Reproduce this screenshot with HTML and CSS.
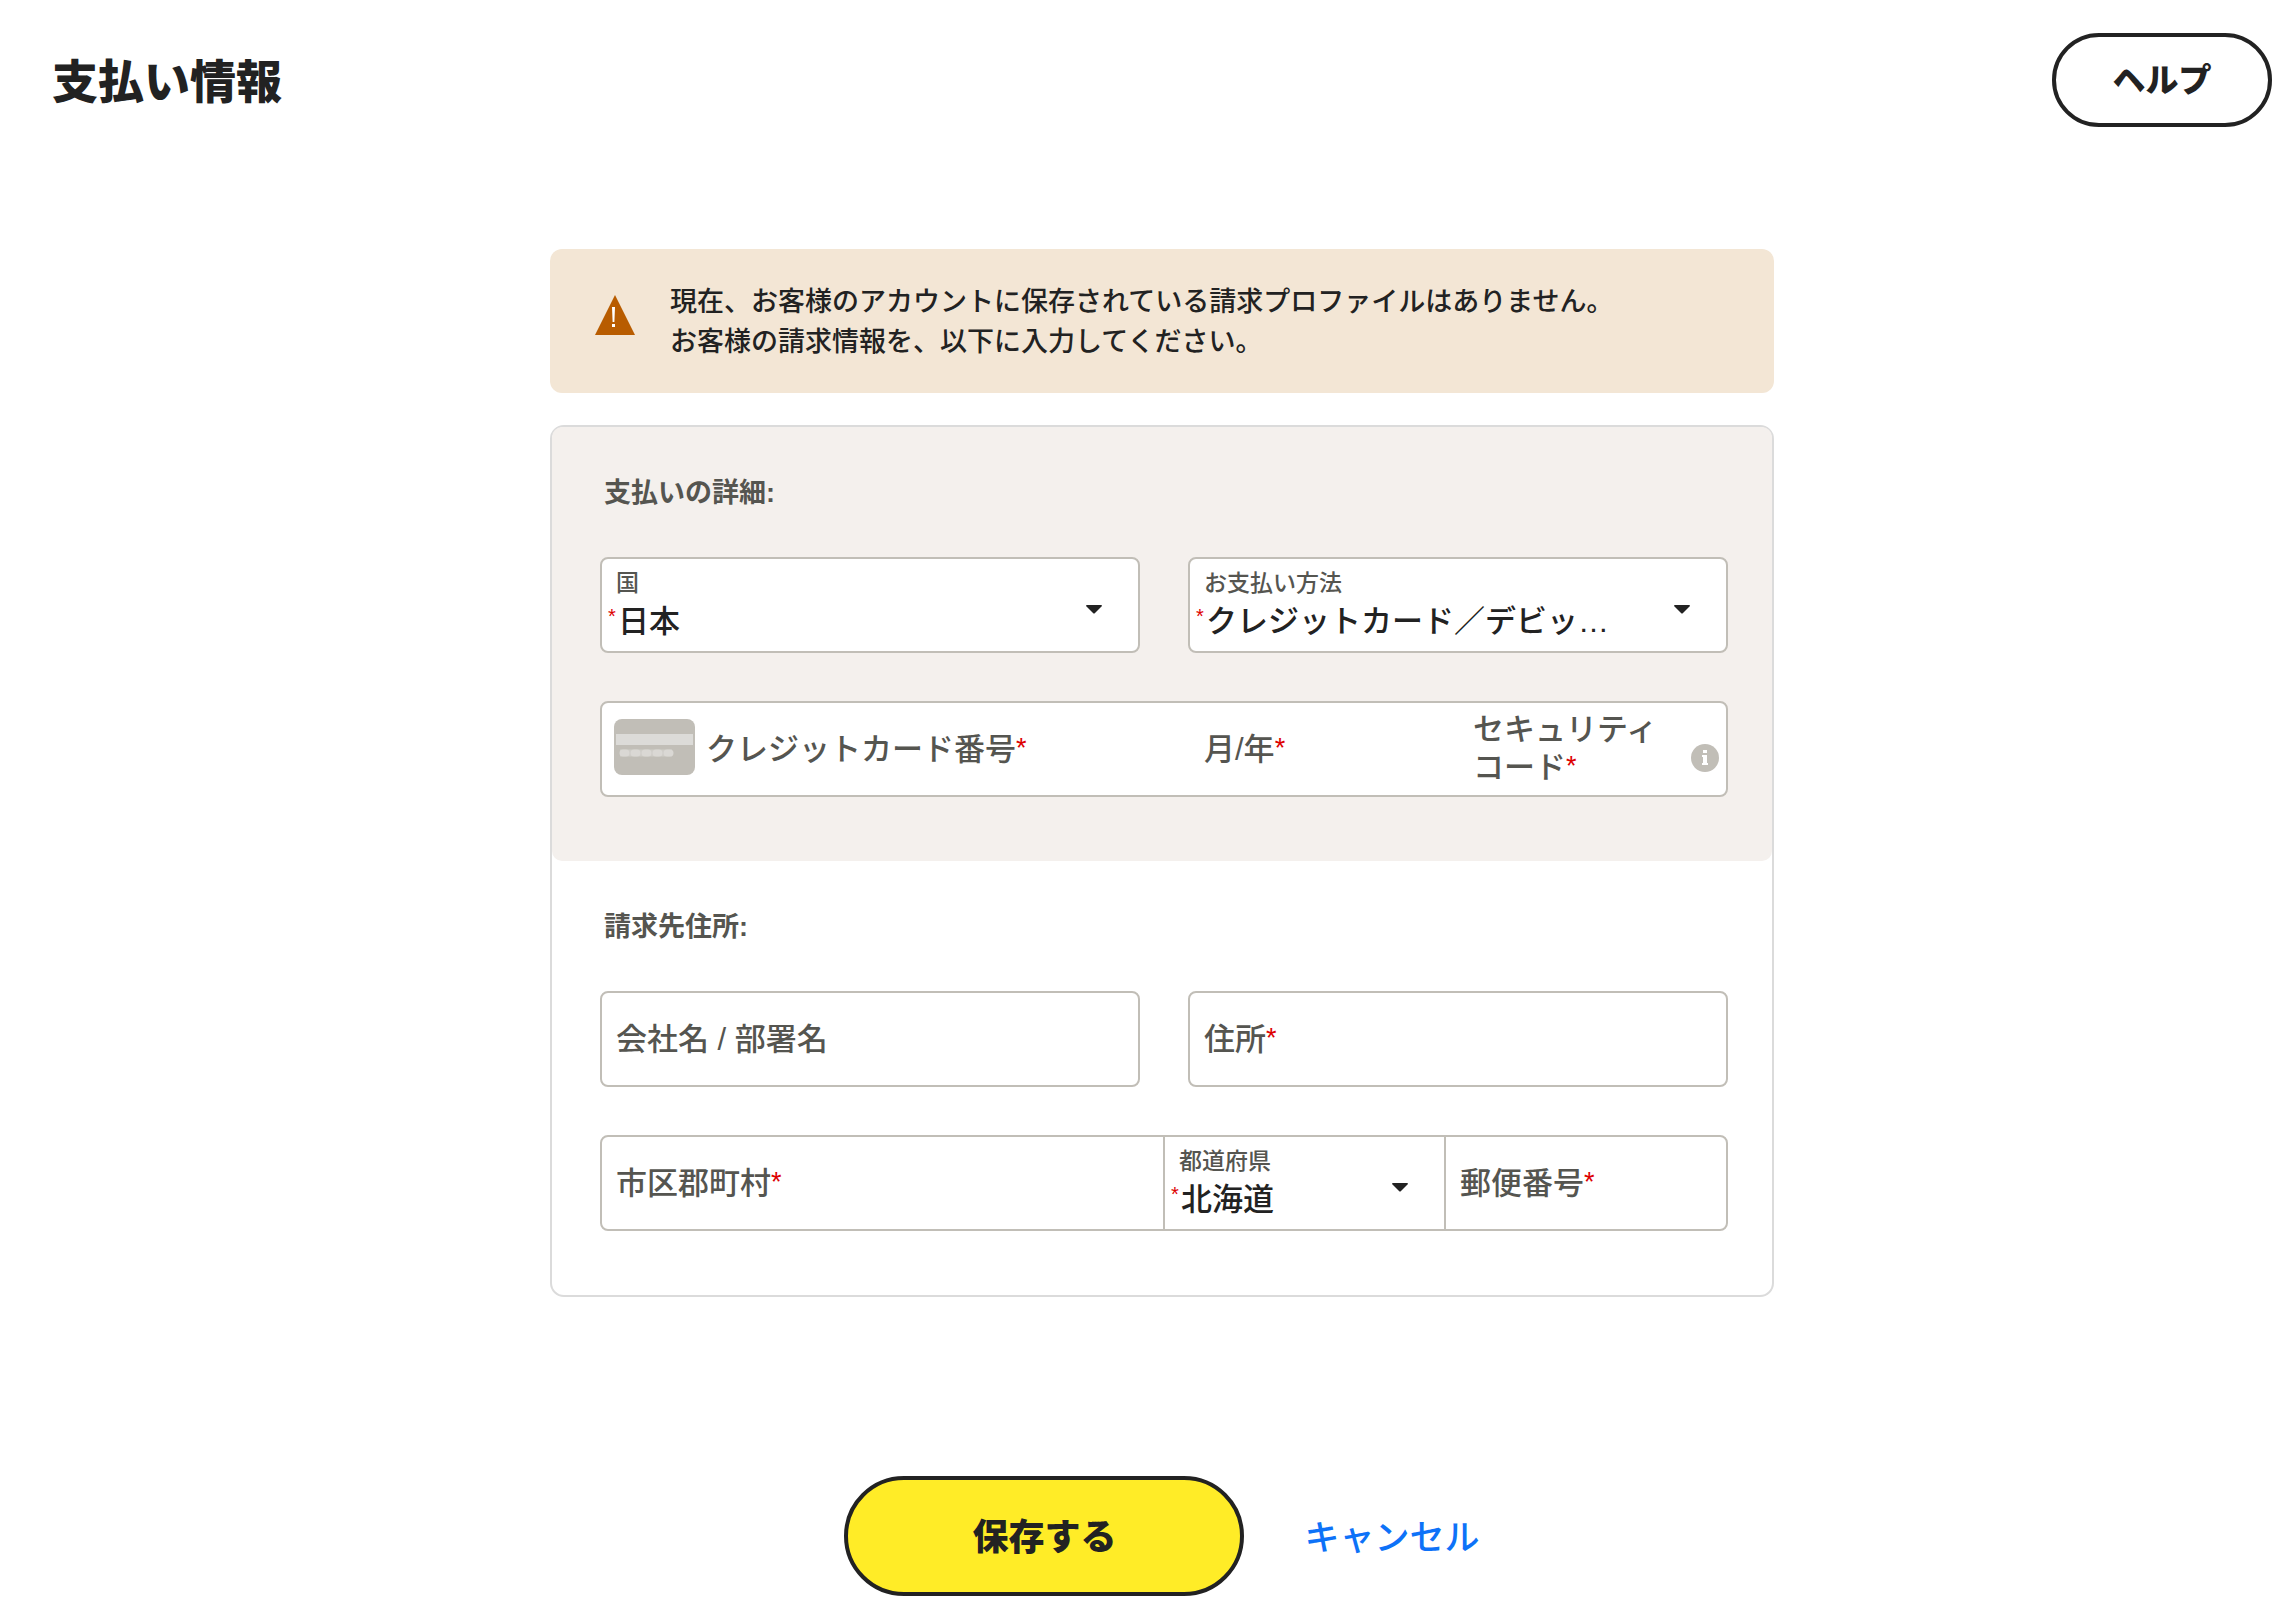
FILE: index.html
```html
<!DOCTYPE html>
<html lang="ja">
<head>
<meta charset="utf-8">
<meta name="viewport" content="width=device-width, initial-scale=1">
<title>支払い情報</title>
<link rel="stylesheet" href="styles.css">
</head>
<body>
<header class="page-header">
  <h1 class="page-title">支払い情報</h1>
  <button class="pill help" type="button">ヘルプ</button>
</header>

<main class="content">
  <div class="notice" role="alert">
    <svg class="notice-icon" viewBox="0 0 40 40" aria-hidden="true">
      <path d="M20 0 40 40H0Z" fill="#b85c00"/>
      <path d="M17 12h3l-.6 15h-1.8Z M17 29h3v3h-3Z" fill="#fff"/>
    </svg>
    <p class="notice-text">現在、お客様のアカウントに保存されている請求プロファイルはありません。<br>お客様の請求情報を、以下に入力してください。</p>
  </div>

  <form class="form">
    <div class="card">
      <section class="section section-payment">
        <h2 class="section-title">支払いの詳細:</h2>
        <div class="rows">
          <div class="row">
            <div class="box field field-select">
              <label class="small-label" for="country">国</label>
              <span class="req-mark" aria-hidden="true">*</span>
              <select class="control select" id="country" required><option>日本</option></select>
              <svg class="arrow" viewBox="0 0 16 9" aria-hidden="true"><path d="M0 1Q0 0 1 0H15Q16 0 16 1L9 8Q8 9 7 8Z"/></svg>
            </div>
            <div class="box field field-select">
              <label class="small-label" for="method">お支払い方法</label>
              <span class="req-mark" aria-hidden="true">*</span>
              <select class="control select" id="method" required><option>クレジットカード／デビッ…</option></select>
              <svg class="arrow" viewBox="0 0 16 9" aria-hidden="true"><path d="M0 1Q0 0 1 0H15Q16 0 16 1L9 8Q8 9 7 8Z"/></svg>
            </div>
          </div>
          <div class="box card-entry">
            <div class="card-number">
              <svg class="card-icon" viewBox="0 0 81 56" aria-hidden="true">
                <rect width="81" height="56" rx="8" fill="#c1beb7"/>
                <rect x="2" y="15" width="77" height="11" fill="#dcdbd8"/>
                <path d="M6 34H58" stroke="#cfcdc8" stroke-width="7"/>
                <path d="M9 34H57" stroke="#dad8d4" stroke-width="7" stroke-linecap="round" stroke-dasharray="3 8"/>
              </svg>
              <div class="field">
                <label class="label" for="number">クレジットカード番号<span class="req">*</span></label>
                <input class="control" id="number" type="text" inputmode="numeric" required>
              </div>
            </div>
            <div class="field">
              <label class="label" for="expiry">月/年<span class="req">*</span></label>
              <input class="control" id="expiry" type="text" inputmode="numeric" required>
            </div>
            <div class="security">
              <div class="field">
                <label class="label" for="cvc">セキュリティコード<span class="req">*</span></label>
                <input class="control" id="cvc" type="text" inputmode="numeric" required>
              </div>
              <svg class="info" viewBox="0 0 28 28" role="img" aria-label="情報">
                <circle cx="14" cy="14" r="14" fill="#c1beb7"/>
                <path d="M12 6h4v3h-4Z M11 11h5v8h1v2h-6v-2h1v-6h-1Z" fill="#fff"/>
              </svg>
            </div>
          </div>
        </div>
      </section>

      <section class="section">
        <h2 class="section-title">請求先住所:</h2>
        <div class="rows">
          <div class="row">
            <div class="box field">
              <label class="label" for="company">会社名 / 部署名</label>
              <input class="control" id="company" type="text">
            </div>
            <div class="box field">
              <label class="label" for="address">住所<span class="req">*</span></label>
              <input class="control" id="address" type="text" required>
            </div>
          </div>
          <div class="box city-row">
            <div class="field">
              <label class="label" for="city">市区郡町村<span class="req">*</span></label>
              <input class="control" id="city" type="text" required>
            </div>
            <div class="field field-select">
              <label class="small-label" for="pref">都道府県</label>
              <span class="req-mark" aria-hidden="true">*</span>
              <select class="control select" id="pref" required><option>北海道</option></select>
              <svg class="arrow" viewBox="0 0 16 9" aria-hidden="true"><path d="M0 1Q0 0 1 0H15Q16 0 16 1L9 8Q8 9 7 8Z"/></svg>
            </div>
            <div class="field">
              <label class="label" for="postal">郵便番号<span class="req">*</span></label>
              <input class="control" id="postal" type="text" required>
            </div>
          </div>
        </div>
      </section>
    </div>

    <div class="actions">
      <button class="pill save" type="submit">保存する</button>
      <a class="cancel" href="#">キャンセル</a>
    </div>
  </form>
</main>
</body>
</html>
```

FILE: styles.css
```css
* { box-sizing: border-box; }

body {
  margin: 0;
  padding: 33px 4px 3px 52px;
  background: #fff;
  color: #222;
  font-family: "Liberation Sans", "Noto Sans CJK JP", sans-serif;
  font-weight: 500;
}

h1, h2, p { margin: 0; }

button, input, select {
  font: inherit;
  color: inherit;
}

/* Header */
.page-header {
  display: flex;
  align-items: center;
  justify-content: space-between;
}

.page-title {
  padding-top: 4px;
  font-size: 46px;
  line-height: 60px;
  font-weight: 900;
}

.pill {
  padding: 0 0 4px;
  border: 4px solid #222;
  border-radius: 60px;
  font-weight: 900;
  cursor: pointer;
}

.help {
  min-width: 220px;
  height: 94px;
  background: #fff;
  font-size: 33px;
}

/* Content column */
.content {
  max-width: 1224px;
  margin: 122px auto 0;
}

.notice {
  display: flex;
  align-items: flex-start;
  gap: 35px;
  padding: 33px 45px 31px;
  border-radius: 12px;
  background: #f3e6d5;
}

.notice-icon {
  flex: none;
  width: 40px;
  height: 40px;
  margin-top: 13px;
}

.notice-text {
  font-size: 27px;
  line-height: 40px;
}

.card {
  margin-top: 32px;
  border: 2px solid #dbdbdb;
  border-radius: 14px;
}

.section {
  padding: 46px 44px 64px 48px;
}

.section-payment {
  border-radius: 10px;
  background: #f4f0ed;
}

.section-title {
  padding-left: 4px;
  margin-bottom: 44px;
  color: #555550;
  font-size: 27px;
  line-height: 40px;
  font-weight: 700;
}

.rows {
  display: grid;
  gap: 48px;
}

.row {
  display: grid;
  grid-template-columns: 1fr 1fr;
  gap: 48px;
}

/* Fields */
.box {
  min-height: 96px;
  border: 2px solid #c1beb7;
  border-radius: 8px;
  background: #fff;
}

.field {
  display: grid;
  grid-template-columns: minmax(0, 1fr);
  min-width: 0;
}

.field > * { grid-area: 1 / 1; }

.label {
  align-self: center;
  padding: 2px 16px 0 14px;
  color: #555550;
  font-size: 31px;
  line-height: 38px;
  pointer-events: none;
  z-index: 1;
}

.req, .req-mark { color: #d00; }

.req {
  font-size: 27px;
  line-height: 1;
  vertical-align: 3px;
}

.control {
  width: 100%;
  min-width: 0;
  border: 0;
  padding: 0 16px;
  background: transparent;
  font-size: 31px;
  appearance: none;
}

.small-label {
  align-self: start;
  padding: 8px 0 0 14px;
  color: #555550;
  font-size: 23px;
  line-height: 32px;
  pointer-events: none;
}

.req-mark {
  align-self: start;
  padding: 41px 0 0 6px;
  font-size: 20px;
  line-height: 32px;
}

.select { padding: 33px 60px 0 16px; }

.arrow {
  align-self: center;
  justify-self: end;
  width: 16px;
  height: 9px;
  margin: 9px 36px 0 0;
  fill: #222;
  pointer-events: none;
}

.card-entry {
  display: grid;
  grid-template-columns: 588fr 269fr 267fr;
}

.card-number {
  display: grid;
  grid-template-columns: 81px 1fr;
  padding-left: 12px;
}

.card-number .label { padding-left: 11px; }

.card-icon {
  align-self: start;
  width: 81px;
  height: 56px;
  margin-top: 16px;
}

.security {
  display: grid;
  grid-template-columns: 1fr 28px;
  padding-right: 7px;
}

.info {
  align-self: end;
  width: 28px;
  height: 28px;
  margin-bottom: 23px;
}

.security .label {
  padding-top: 0;
  padding-right: 28px;
}

.city-row {
  display: grid;
  grid-template-columns: 561fr 281fr 282fr;
}

.city-row .field + .field { border-left: 2px solid #c1beb7; }

/* Actions */
.actions {
  display: flex;
  align-items: center;
  justify-content: center;
  gap: 60px;
  margin-top: 179px;
}

.save {
  width: 400px;
  height: 120px;
  background: #ffec27;
  font-size: 36px;
}

.cancel {
  padding-bottom: 4px;
  color: #0d72f8;
  font-size: 35px;
  text-decoration: none;
}
```
